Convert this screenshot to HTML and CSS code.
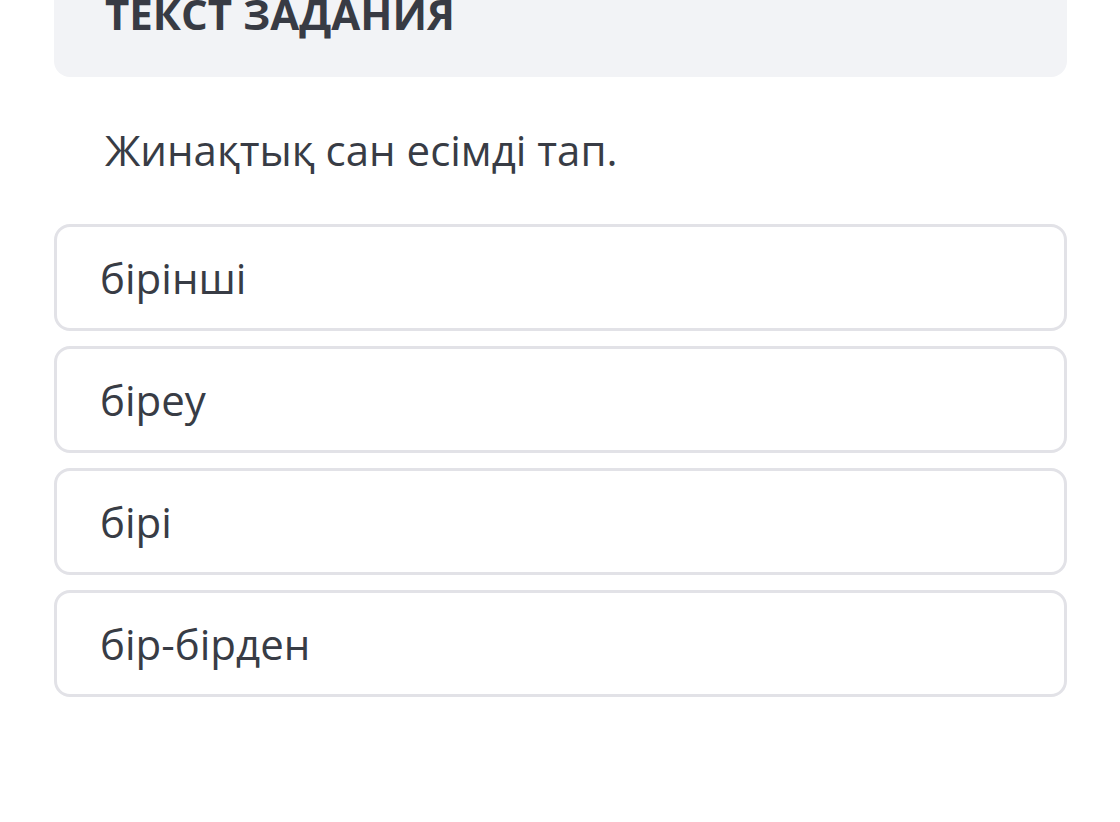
FILE: index.html
```html
<!DOCTYPE html>
<html lang="kk">
<head>
<meta charset="utf-8">
<title>Текст задания</title>
<link rel="stylesheet" href="styles.css">
</head>
<body>
<main class="task">
  <section class="task-head">
    <h1 class="task-title">ТЕКСТ ЗАДАНИЯ</h1>
  </section>
  <p class="task-question">Жинақтық сан есімді тап.</p>
  <ul class="options">
    <li class="option">бірінші</li>
    <li class="option">біреу</li>
    <li class="option">бірі</li>
    <li class="option">бір-бірден</li>
  </ul>
</main>
</body>
</html>
```
FILE: styles.css
```css
html, body {
  margin: 0;
  padding: 0;
  background: #ffffff;
}
body {
  font-family: "Open Sans", "Noto Sans", sans-serif;
  color: #383c45;
  overflow: hidden;
}
.task {
  width: 1013px;
  margin-left: 54px;
  display: flex;
  flex-direction: column;
}
.task-head {
  margin-top: -27px;
  padding: 20px 51px 42px;
  background: #f2f3f6;
  border-radius: 0 0 16px 16px;
}
.task-title {
  margin: 0;
  font-size: 42px;
  line-height: 42px;
  font-weight: 700;
  color: #383b44;
}
.task-question {
  margin: 52px 0 53px 51px;
  font-size: 42px;
  line-height: 42px;
  font-weight: 400;
}
.options {
  list-style: none;
  margin: 0;
  padding: 0;
  display: flex;
  flex-direction: column;
  gap: 15px;
}
.option {
  box-sizing: border-box;
  height: 107px;
  border: 3px solid #e2e2e7;
  border-radius: 16px;
  padding: 0 43px;
  display: flex;
  align-items: center;
  font-size: 42px;
  line-height: 42px;
}
```
